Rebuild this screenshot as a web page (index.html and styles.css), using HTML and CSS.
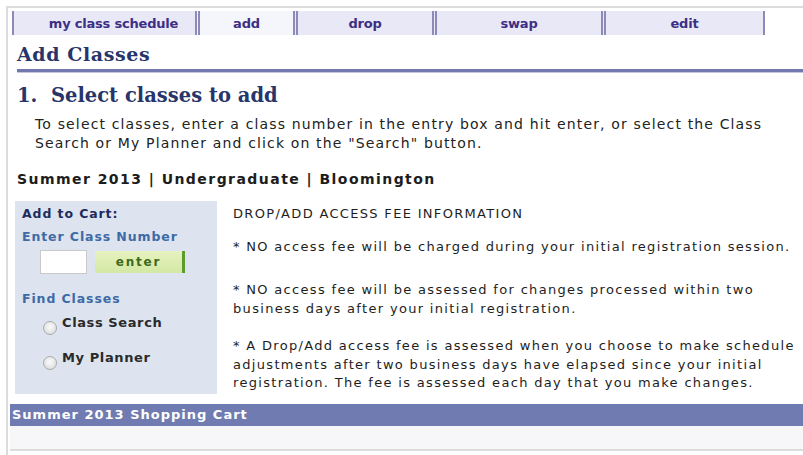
FILE: index.html
```html
<!DOCTYPE html>
<html lang="en">
<head>
<meta charset="utf-8">
<title>Add Classes</title>
<link rel="stylesheet" href="styles.css">
</head>
<body>
<div class="frame">
  <nav class="tabs">
    <a class="tab tab-first">my class schedule</a>
    <a class="tab tab-add active">add</a>
    <a class="tab tab-drop">drop</a>
    <a class="tab tab-swap">swap</a>
    <a class="tab tab-edit tab-last">edit</a>
  </nav>

  <h1 class="page-title">Add Classes</h1>
  <div class="title-rule"></div>

  <h2 class="step-title">1.&nbsp; Select classes to add</h2>
  <p class="intro">To select classes, enter a class number in the entry box and hit enter, or select the Class<br>Search or My Planner and click on the "Search" button.</p>

  <div class="term">Summer 2013 | Undergraduate | Bloomington</div>

  <div class="main">
    <aside class="cart-panel">
      <div class="panel-label">Add to Cart:</div>
      <div class="panel-sub">Enter Class Number</div>
      <div class="entry-row">
        <input class="class-input" type="text">
        <button class="enter-btn">enter</button>
      </div>
      <div class="panel-sub find">Find Classes</div>
      <label class="radio-row"><span class="radio"></span><span class="radio-text">Class Search</span></label>
      <label class="radio-row"><span class="radio"></span><span class="radio-text">My Planner</span></label>
    </aside>

    <div class="fee-info">
      <p class="fee-head">DROP/ADD ACCESS FEE INFORMATION</p>
      <p class="fee-one">* NO access fee will be charged during your initial registration session.</p>
      <p class="fee-two">* NO access fee will be assessed for changes processed within two<br>business days after your initial registration.</p>
      <p class="fee-three">* A Drop/Add access fee is assessed when you choose to make schedule<br>adjustments after two business days have elapsed since your initial<br>registration. The fee is assessed each day that you make changes.</p>
    </div>
  </div>

  <div class="cart-bar">Summer 2013 Shopping Cart</div>
  <div class="cart-body"></div>
</div>
</body>
</html>
```

FILE: styles.css
```css
html, body {
  margin: 0;
  padding: 0;
  background: #ffffff;
  overflow: hidden;
}

body {
  font-family: "DejaVu Sans", Verdana, sans-serif;
  color: #1e1e1e;
}

.frame {
  margin: 6px 0 0 6px;
  border-top: 2px solid #dcdcdc;
  border-left: 2px solid #dcdcdc;
  padding: 3px 0 0 4px;
  height: 455px;
  box-sizing: border-box;
}

/* tab strip */
.tabs {
  display: flex;
  height: 24px;
}

.tab {
  display: flex;
  align-items: center;
  justify-content: center;
  padding-top: 1px;
  box-sizing: border-box;
  background: #e9e8f6;
  color: #3c2f84;
  font-size: 13px;
  font-weight: bold;
  letter-spacing: -0.2px;
  border-left: 5px double #8d8ab8;
}

.tab.active {
  background: #f5f5fc;
}

.tab-first {
  width: 183px;
  padding-left: 18px;
  border-left: 2px solid #8d8ab8;
}
.tab-add  { width: 98px; }
.tab-drop { width: 139px; }
.tab-swap { width: 169px; }
.tab-edit { width: 164px; }
.tab-last { border-right: 2px solid #8d8ab8; }

/* headings */
.page-title {
  margin: 6px 0 0 5px;
  font-family: "DejaVu Serif", Georgia, serif;
  font-size: 19px;
  font-weight: bold;
  letter-spacing: 0.6px;
  color: #28356a;
  line-height: 26px;
}

.title-rule {
  margin: 2px 0 0 5px;
  height: 3px;
  background: #7379af;
  border-bottom: 1px solid #c4c6e0;
}

.step-title {
  margin: 9px 0 0 5px;
  font-family: "DejaVu Serif", Georgia, serif;
  font-size: 19.5px;
  font-weight: bold;
  color: #28356a;
  line-height: 28px;
}

.intro {
  margin: 5px 0 0 23px;
  font-size: 14px;
  letter-spacing: 1.15px;
  line-height: 19px;
  color: #222;
  white-space: nowrap;
}

.term {
  margin: 17px 0 0 5px;
  font-size: 14px;
  font-weight: bold;
  letter-spacing: 1.45px;
  color: #1c1c1c;
  line-height: 18px;
}

/* two-column area */
.main {
  display: flex;
  height: 193px;
  margin-top: 13px;
  margin-left: 3px;
}

.cart-panel {
  width: 202px;
  height: 193px;
  background: #dde4ef;
  padding: 5px 0 0 7px;
  box-sizing: border-box;
  flex: none;
}

.panel-label {
  font-size: 12.5px;
  font-weight: bold;
  letter-spacing: 0.9px;
  color: #1d2c5c;
  line-height: 16px;
}

.panel-sub {
  font-size: 12.5px;
  font-weight: bold;
  letter-spacing: 0.9px;
  color: #3e6aa6;
  line-height: 16px;
  margin-top: 7px;
}

.panel-sub.find {
  margin-top: 17px;
}

.entry-row {
  display: flex;
  align-items: center;
  margin: 5px 0 0 18px;
}

.class-input {
  width: 47px;
  height: 24px;
  box-sizing: border-box;
  border: 1px solid #c9c9c9;
  background: #fff;
  margin: 0;
  padding: 0;
}

.enter-btn {
  margin-left: 8px;
  width: 90px;
  height: 22px;
  border: none;
  border-right: 3px solid #5f9a2e;
  background: linear-gradient(#e6f2c0, #d3e8a4);
  color: #3b6a1a;
  font-family: "DejaVu Sans", Verdana, sans-serif;
  font-size: 12px;
  font-weight: bold;
  padding: 0;
  letter-spacing: 1.8px;
}

.radio-row {
  display: flex;
  align-items: flex-start;
  margin: 8px 0 0 21px;
  height: 23px;
}

.radio-row + .radio-row {
  margin-top: 12px;
}

.radio {
  width: 12px;
  height: 12px;
  border-radius: 50%;
  border: 1px solid #a9a9a9;
  background: radial-gradient(circle at 50% 40%, #fbfbfb, #d6d6d6);
  margin-top: 6px;
  flex: none;
}

.radio-text {
  margin-left: 5px;
  font-size: 13px;
  font-weight: bold;
  letter-spacing: 0.6px;
  color: #2a2a2a;
  line-height: 16px;
}

.fee-info {
  padding: 3px 0 0 16px;
  font-size: 13px;
  letter-spacing: 1.32px;
  line-height: 19px;
  color: #1e1e1e;
  white-space: nowrap;
}

.fee-info p {
  margin: 0;
}

.fee-head { margin-bottom: 14px !important; }
.fee-one  { margin-bottom: 24px !important; }
.fee-two  { margin-bottom: 19px !important; }
.fee-three { line-height: 18.5px; }

/* shopping cart */
.cart-bar {
  margin: 10px 0 0 -2px;
  height: 22px;
  background: #6f7bb1;
  color: #ffffff;
  font-size: 13px;
  font-weight: bold;
  letter-spacing: 1px;
  line-height: 22px;
  padding-left: 2px;
}

.cart-body {
  margin-left: -2px;
  height: 23px;
  background: #f7f7f9;
  border-bottom: 2px solid #dcdcdc;
}
```
